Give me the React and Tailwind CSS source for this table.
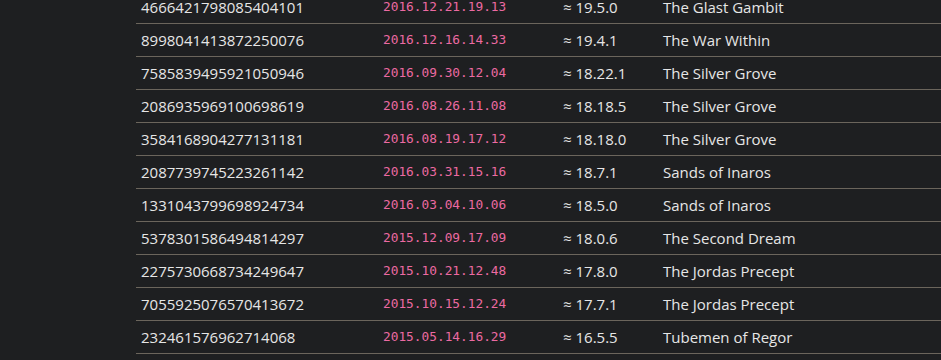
import React from "react";

const rows = [
  ["4666421798085404101", "2016.12.21.19.13", "19.5.0", "The Glast Gambit"],
  ["8998041413872250076", "2016.12.16.14.33", "19.4.1", "The War Within"],
  ["7585839495921050946", "2016.09.30.12.04", "18.22.1", "The Silver Grove"],
  ["2086935969100698619", "2016.08.26.11.08", "18.18.5", "The Silver Grove"],
  ["3584168904277131181", "2016.08.19.17.12", "18.18.0", "The Silver Grove"],
  ["2087739745223261142", "2016.03.31.15.16", "18.7.1", "Sands of Inaros"],
  ["1331043799698924734", "2016.03.04.10.06", "18.5.0", "Sands of Inaros"],
  ["5378301586494814297", "2015.12.09.17.09", "18.0.6", "The Second Dream"],
  ["2275730668734249647", "2015.10.21.12.48", "17.8.0", "The Jordas Precept"],
  ["7055925076570413672", "2015.10.15.12.24", "17.7.1", "The Jordas Precept"],
  ["232461576962714068", "2015.05.14.16.29", "16.5.5", "Tubemen of Regor"],
];

export default function App() {
  return (
    <div className="w-[941px] h-[360px] overflow-hidden bg-[#1e1f21] text-[#e6e6e6]" style={{ fontFamily: "'Open Sans', 'Noto Sans', sans-serif" }}>
      <div className="ml-[136px] -mt-[9px]">
        {rows.map((r, i) => (
          <div key={i} className="flex items-center h-[33px] border-b border-[#6b655c] text-[15px]">
            <div className="w-[242px] pl-[5px]">{r[0]}</div>
            <div className="w-[180px] pl-[5px] text-[#ec6aa2] text-[12.8px]" style={{ fontFamily: "'DejaVu Sans Mono', 'Liberation Mono', monospace" }}>{r[1]}</div>
            <div className="w-[100px] pl-[5px]">≈ {r[2]}</div>
            <div className="flex-1 pl-[5px]">{r[3]}</div>
          </div>
        ))}
      </div>
    </div>
  );
}
